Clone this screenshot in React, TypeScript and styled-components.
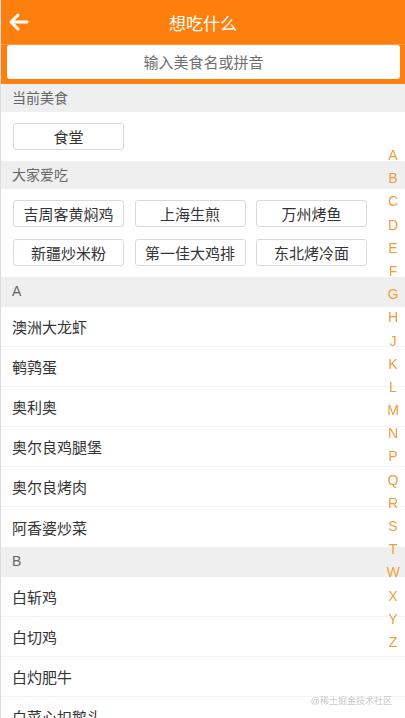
import React from 'react';
import styled, { createGlobalStyle } from 'styled-components';

const GlobalStyle = createGlobalStyle`
  html, body {
    margin: 0;
    padding: 0;
    background: #ffffff;
    font-family: "Liberation Sans", "Noto Sans CJK SC", sans-serif;
  }
  * { box-sizing: border-box; }
`;

const Page = styled.div`
  width: 405px;
  min-height: 718px;
  border-left: 1px solid #dcdcdc;
  position: relative;
`;

const TopArea = styled.div`
  background: #ff7f0e;
  padding-bottom: 5px;
`;

const NavBar = styled.header`
  height: 45px;
  display: flex;
  align-items: center;
  justify-content: center;
  position: relative;
  border-bottom: 1px solid #ff9a45;
`;

const BackBtn = styled.button`
  position: absolute;
  left: 6px;
  top: 10px;
  background: none;
  border: none;
  padding: 0;
  display: flex;
  cursor: pointer;
`;

const Title = styled.h1`
  margin: 0;
  color: #ffffff;
  font-size: 17px;
  font-weight: 400;
`;

const SearchWrap = styled.div`
  padding: 0 5px 0 6px;
`;

const SearchInput = styled.input`
  width: 100%;
  height: 34px;
  border: none;
  border-radius: 3px;
  background: #ffffff;
  text-align: center;
  font-size: 15px;
  font-family: inherit;
  color: #333;
  outline: none;
  &::placeholder { color: #6f6f6f; }
`;

const SectionHead = styled.div<{ h?: number }>`
  height: ${p => p.h || 28}px;
  line-height: ${p => p.h || 28}px;
  background: #efefef;
  padding-left: 11px;
  font-size: 14px;
  color: #666;
`;

const TagArea = styled.div`
  padding: 11px 0 11px 12px;
  display: grid;
  grid-template-columns: repeat(3, 111px);
  column-gap: 10.5px;
  row-gap: 12px;
`;

const Tag = styled.div`
  height: 27px;
  border: 1px solid #d9d9d9;
  border-radius: 3px;
  display: flex;
  align-items: center;
  justify-content: center;
  font-size: 15px;
  color: #333;
`;

const Item = styled.div`
  height: 40.1px;
  display: flex;
  align-items: center;
  padding-left: 11px;
  font-size: 15px;
  color: #333;
  border-bottom: 1px solid #f4f4f4;
  &:last-child { border-bottom: none; }
`;

const IndexBar = styled.nav`
  position: fixed;
  top: 144px;
  right: 0;
  width: 24px;
  display: flex;
  flex-direction: column;
  align-items: center;
`;

const Letter = styled.span`
  height: 23.2px;
  line-height: 23.2px;
  font-size: 14px;
  color: #f39a3a;
`;

const Watermark = styled.div`
  position: fixed;
  right: 13px;
  top: 694px;
  font-size: 9px;
  color: #c6c6c6;
`;

const hot = ['吉周客黄焖鸡', '上海生煎', '万州烤鱼', '新疆炒米粉', '第一佳大鸡排', '东北烤冷面'];

const groups: { key: string; items: string[] }[] = [
  { key: 'A', items: ['澳洲大龙虾', '鹌鹑蛋', '奥利奥', '奥尔良鸡腿堡', '奥尔良烤肉', '阿香婆炒菜'] },
  { key: 'B', items: ['白斩鸡', '白切鸡', '白灼肥牛', '白菜心扣鹅头', '北京烤鸭'] },
];

const letters = 'ABCDEFGHJKLMNPQRSTWXYZ'.split('');

export default function App() {
  return (
    <Page>
      <GlobalStyle />
      <TopArea>
        <NavBar>
          <BackBtn>
            <svg width="24" height="24" viewBox="0 0 24 24" fill="none" stroke="#fff" strokeWidth="3" strokeLinecap="round" strokeLinejoin="round">
              <path d="M20 12H5" />
              <path d="M11 5l-7 7 7 7" />
            </svg>
          </BackBtn>
          <Title>想吃什么</Title>
        </NavBar>
        <SearchWrap>
          <SearchInput placeholder="输入美食名或拼音" />
        </SearchWrap>
      </TopArea>

      <SectionHead>当前美食</SectionHead>
      <TagArea>
        <Tag>食堂</Tag>
      </TagArea>

      <SectionHead>大家爱吃</SectionHead>
      <TagArea>
        {hot.map(h => <Tag key={h}>{h}</Tag>)}
      </TagArea>

      {groups.map(g => (
        <div key={g.key}>
          <SectionHead h={29.5}>{g.key}</SectionHead>
          {g.items.map(i => <Item key={i}>{i}</Item>)}
        </div>
      ))}

      <IndexBar>
        {letters.map(l => <Letter key={l}>{l}</Letter>)}
      </IndexBar>
      <Watermark>@稀土掘金技术社区</Watermark>
    </Page>
  );
}
